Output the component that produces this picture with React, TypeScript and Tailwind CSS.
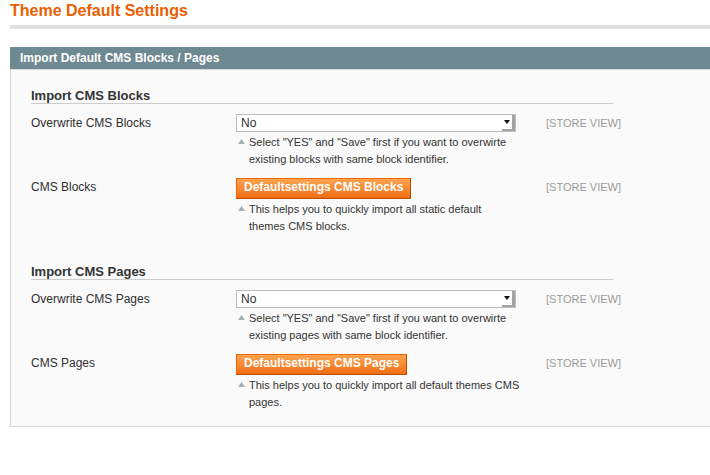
import React from "react";

function Hint({ lines }: { lines: string[] }) {
  return (
    <div className="mt-[2px] flex text-[11px] leading-[17px] text-[#333]">
      <div className="w-[13px] shrink-0 pl-[2px] pt-[5px]">
        <svg width="7" height="5" viewBox="0 0 7 5">
          <path d="M3.5 0 L7 5 L0 5 Z" fill="#a4b0b6" />
        </svg>
      </div>
      <div className="whitespace-nowrap">
        {lines.map((l, i) => (
          <div key={i}>{l}</div>
        ))}
      </div>
    </div>
  );
}

function Select() {
  return (
    <div className="flex h-[18px] w-[280px] border border-[#bdbdbd] bg-white">
      <div className="flex-1 pl-[4px] text-[12px] leading-[16px] text-[#2f2f2f]">No</div>
      <div className="flex w-[13px] items-center justify-center border-b-[2px] border-r-[3px] border-[#a3a3a3] pb-[1px]">
        <svg width="6" height="4" viewBox="0 0 6 4">
          <path d="M0 0 H6 L3 4 Z" fill="#111" />
        </svg>
      </div>
    </div>
  );
}

function OrangeButton({ text }: { text: string }) {
  return (
    <button className="block h-[21px] border border-b-[#b84d00] border-l-[#ed6502] border-r-[#b84d00] border-t-[#ed6502] bg-linear-to-b from-[#fda34e] to-[#f06e0d] px-[7px] pb-[2px] text-[12px] font-bold leading-[17px] text-white">
      {text}
    </button>
  );
}

function Row({
  label,
  control,
  hint,
}: {
  label: string;
  control: React.ReactNode;
  hint: string[];
}) {
  return (
    <div className="mt-[10px] flex items-start">
      <div className="w-[205px] text-[12px] leading-[18px] text-[#2f2f2f]">{label}</div>
      <div className="w-[284px]">
        {control}
        <Hint lines={hint} />
      </div>
      <div className="ml-[26px] text-[11px] leading-[18px] text-[#999]">[STORE VIEW]</div>
    </div>
  );
}

function Heading({ title, mt }: { title: string; mt: string }) {
  return (
    <div className={`${mt} w-[582px] border-b border-[#cccccc] text-[13px] font-bold leading-[15px] text-[#333]`}>
      {title}
    </div>
  );
}

export default function App() {
  return (
    <div className="h-[475px] w-[710px] overflow-hidden bg-white font-['Liberation_Sans',Arial,sans-serif] text-[#2f2f2f]">
      <div className="pl-[10px] pt-[2px] text-[16px] font-bold leading-[18px] text-[#eb5e00]">
        Theme Default Settings
      </div>
      <div className="ml-[10px] mt-[5px] h-[4px] bg-[#dfdfdf]" />
      <div className="ml-[10px] mt-[18px] h-[22px] bg-[#6f8992] pl-[10px] text-[12px] font-bold leading-[22px] text-white">
        Import Default CMS Blocks / Pages
      </div>
      <div className="ml-[10px] w-[710px] border border-[#d6d6d6] bg-[#fafafa] pb-[15px] pl-[20px]">
        <Heading title="Import CMS Blocks" mt="mt-[18px]" />
        <Row
          label="Overwrite CMS Blocks"
          control={<Select />}
          hint={[
            'Select "YES" and "Save" first if you want to overwirte',
            "existing blocks with same block identifier.",
          ]}
        />
        <Row
          label="CMS Blocks"
          control={<OrangeButton text="Defaultsettings CMS Blocks" />}
          hint={["This helps you to quickly import all static default", "themes CMS blocks."]}
        />
        <Heading title="Import CMS Pages" mt="mt-[29px]" />
        <Row
          label="Overwrite CMS Pages"
          control={<Select />}
          hint={[
            'Select "YES" and "Save" first if you want to overwirte',
            "existing pages with same block identifier.",
          ]}
        />
        <Row
          label="CMS Pages"
          control={<OrangeButton text="Defaultsettings CMS Pages" />}
          hint={["This helps you to quickly import all default themes CMS", "pages."]}
        />
      </div>
    </div>
  );
}
